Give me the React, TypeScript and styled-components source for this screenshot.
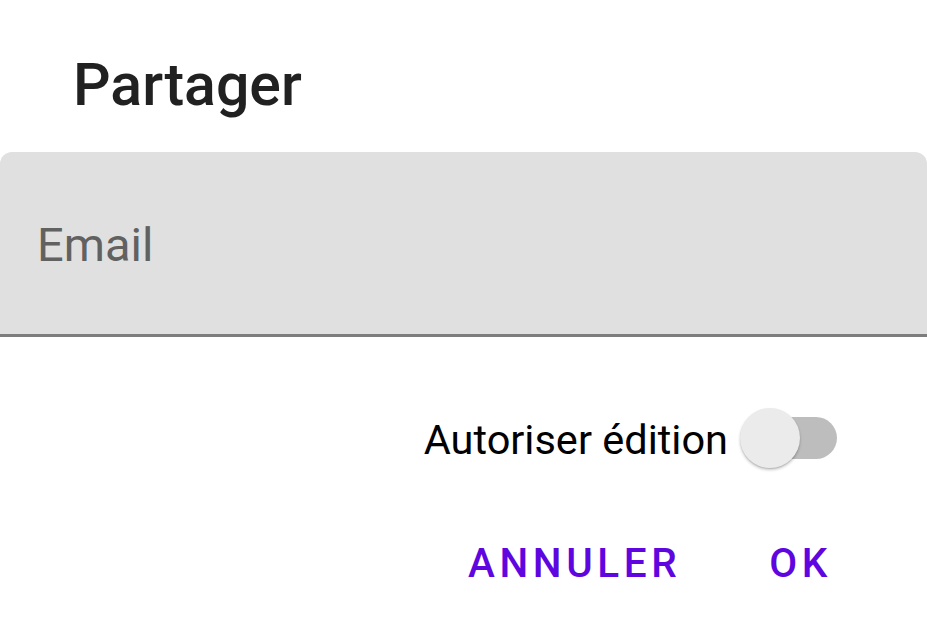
import React, { useState } from 'react';
import styled, { createGlobalStyle } from 'styled-components';

const GlobalStyle = createGlobalStyle`
    html, body {
        margin: 0;
        padding: 0;
        background: #ffffff;
        overflow: hidden;
    }
    body {
        font-family: Roboto, "Noto Sans", sans-serif;
    }
`;

const Dialog = styled.div`
    width: 927px;
    height: 621px;
    display: flex;
    flex-direction: column;
    background: #ffffff;
`;

const Title = styled.h1`
    margin: 55px 0 0 73px;
    font-size: 59px;
    line-height: 59px;
    font-weight: 500;
    color: #212121;
    letter-spacing: 0;
`;

const Field = styled.div`
    margin-top: 38px;
    height: 182px;
    display: flex;
    align-items: center;
    padding-left: 37px;
    background: #e0e0e0;
    border-radius: 12px 12px 0 0;
    border-bottom: 3px solid #7d7d7d;
`;

const Placeholder = styled.span`
    font-size: 47px;
    color: #616161;
    transform: translateY(1px);
`;

const SwitchRow = styled.label`
    margin-top: 71px;
    display: flex;
    align-items: center;
    justify-content: flex-end;
    gap: 12px;
    padding-right: 90px;
    cursor: pointer;
`;

const SwitchLabel = styled.span`
    font-size: 41.5px;
    line-height: 42px;
    color: #000000;
    transform: translateY(2px);
`;

const Track = styled.span<{ $on: boolean }>`
    position: relative;
    width: 97px;
    height: 60px;
    display: inline-flex;
    align-items: center;
    &::before {
        content: '';
        position: absolute;
        left: 20px;
        right: 0;
        height: 42px;
        border-radius: 21px;
        background: ${p => (p.$on ? '#b794f6' : '#bdbdbd')};
    }
`;

const Thumb = styled.span<{ $on: boolean }>`
    position: absolute;
    left: ${p => (p.$on ? '37px' : '0')};
    width: 60px;
    height: 60px;
    border-radius: 50%;
    background: ${p => (p.$on ? '#6200ee' : '#ebebeb')};
    box-shadow: 0 2px 3px rgba(0, 0, 0, 0.22), 0 1px 1px rgba(0, 0, 0, 0.1);
`;

const Actions = styled.div`
    margin-top: 75px;
    display: flex;
    justify-content: flex-end;
    gap: 88px;
    padding-right: 95px;
`;

const TextButton = styled.button`
    border: none;
    background: none;
    padding: 0;
    font-family: Roboto, sans-serif;
    font-size: 40.5px;
    line-height: 40px;
    font-weight: 500;
    letter-spacing: 4.6px;
    color: #5f06e0;
    cursor: pointer;
`;

export default function App() {
    const [canEdit, setCanEdit] = useState(false);

    return (
        <>
            <GlobalStyle />
            <Dialog>
                <Title>Partager</Title>
                <Field>
                    <Placeholder>Email</Placeholder>
                </Field>
                <SwitchRow onClick={() => setCanEdit(!canEdit)}>
                    <SwitchLabel>Autoriser édition</SwitchLabel>
                    <Track $on={canEdit}>
                        <Thumb $on={canEdit} />
                    </Track>
                </SwitchRow>
                <Actions>
                    <TextButton>ANNULER</TextButton>
                    <TextButton>OK</TextButton>
                </Actions>
            </Dialog>
        </>
    );
}
